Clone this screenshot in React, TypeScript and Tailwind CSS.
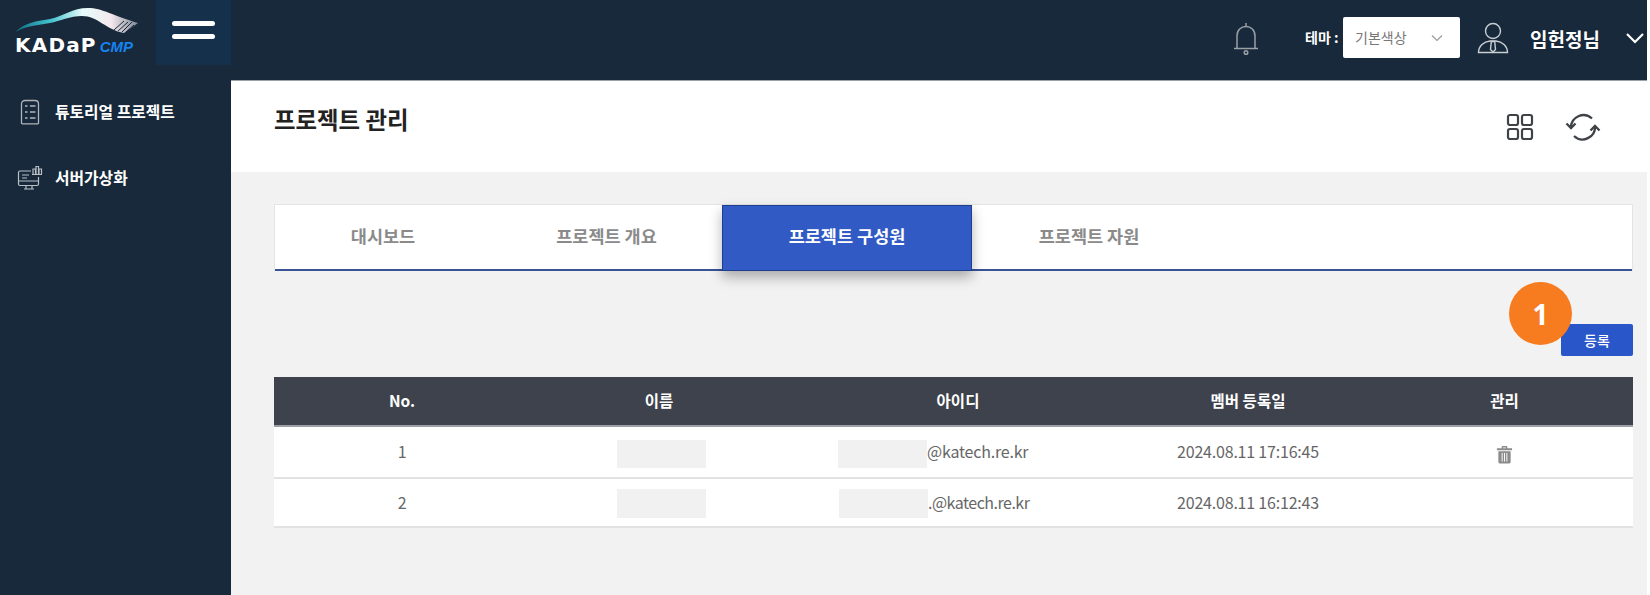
const kr = "font-['Noto_Sans_CJK_KR','Noto_Sans',sans-serif]";

const Logo = () => (
  <div className="relative h-[65px] w-[156px] shrink-0">
    <svg className="absolute left-[14px] top-[8px]" width="126" height="26" viewBox="0 0 126 26">
      <defs>
        <linearGradient id="swoosh" x1="0" x2="1" y1="0" y2="0">
          <stop offset="0" stopColor="#0e6f86" />
          <stop offset="0.3" stopColor="#46c4cf" />
          <stop offset="0.55" stopColor="#e8fbfb" />
          <stop offset="0.78" stopColor="#f3e9ee" />
          <stop offset="1" stopColor="#7d8794" />
        </linearGradient>
      </defs>
      <path d="M1 24C12 14 24 13 36 11C50 8 58 0 74 0C88 0 100 8 124 15L110 25C92 22 84 8 68 8C56 8 46 13 36 15C24 17 12 18 1 24Z" fill="url(#swoosh)" />
      <path d="M100 22l10-9M104 23l10-9M108 24l10-10M112 24l8-7" stroke="#1a2a3a" strokeWidth="1" />
    </svg>
    <div className="absolute left-[15px] top-[33px] flex items-baseline">
      <span className="font-['DejaVu_Sans',sans-serif] text-[20px] font-bold leading-[24px] tracking-[1.2px] text-white">KADaP</span>
      <span className="ml-[3px] font-['Liberation_Sans',sans-serif] text-[15px] font-bold italic leading-[24px] text-[#1583f0]">CMP</span>
    </div>
  </div>
);

const ClipboardIcon = () => (
  <svg width="20" height="26" viewBox="0 0 20 26" fill="none" stroke="#b0b5ba" strokeWidth="1.3">
    <path d="M5 1.500h10c2 0 3.500 1.500 3.500 3.500v19a.8.8 0 0 1-.8.8H2.300a.8.8 0 0 1-.8-.8V5c0-2 1.500-3.500 3.500-3.500Z" />
    <path d="M5 7h2.500M10 7h5.500M5 13h2.500M10 13h5.500M5 19h2.500M10 19h5.500" />
  </svg>
);

const MonitorIcon = () => (
  <svg width="26" height="26" viewBox="0 0 26 26" fill="none" stroke="#b9bfc5" strokeWidth="1.2">
    <path d="M14 6H3a1.500 1.500 0 0 0-1.500 1.500V19A1.500 1.500 0 0 0 3 20.500h17a1.500 1.500 0 0 0 1.500-1.500V12" />
    <path d="M1.500 16h20M9 20.500v3.500h6v-3.500M7 24h10M5 10h7M5 13h5" />
    <path d="M16 9V4h2.500v5M19 9V1.500h2.500V9M22 9V4h2.500v5M15 9.500h10" />
  </svg>
);

const BellIcon = () => (
  <svg width="26" height="34" viewBox="0 0 26 34" fill="none" stroke="#9aa0a6" strokeWidth="1.500">
    <path d="M13 1v3.500M4 26V14c0-6 4-9.500 9-9.500s9 3.500 9 9.500v12" />
    <path d="M1 26.500h24" />
    <circle cx="13" cy="30.500" r="1.800" />
  </svg>
);

const UserIcon = () => (
  <svg width="32" height="32" viewBox="0 0 32 32" fill="none" stroke="#c9ced3" strokeWidth="1.400">
    <circle cx="16" cy="9" r="7.500" />
    <path d="M1.500 30.500C1.500 24 7 19.500 13 19h6c6 .5 11.500 5 11.500 11.500Z" />
    <path d="M14.300 19.500h3.400l.8 8L16 30l-2.500-2.500Z" />
  </svg>
);

const GridIcon = () => (
  <svg width="28" height="28" viewBox="0 0 28 28" fill="none" stroke="#3f4347" strokeWidth="2.200">
    <rect x="2" y="2" width="10" height="10" rx="2" />
    <rect x="16" y="2" width="10" height="10" rx="2" />
    <rect x="2" y="16" width="10" height="10" rx="2" />
    <rect x="16" y="16" width="10" height="10" rx="2" />
  </svg>
);

const RefreshIcon = () => (
  <svg width="36" height="30" viewBox="0 0 36 30" fill="none" stroke="#3f4347" strokeWidth="2.300">
    <path d="M6 16A12.500 12.500 0 0 1 27 6.500" />
    <path d="M30 14A12.500 12.500 0 0 1 9 24" />
    <path d="M1.500 11.500L6 16l4.500-4.500" />
    <path d="M25.500 18.500L30 14l4.500 4.500" />
  </svg>
);

const TrashIcon = () => (
  <svg width="17" height="19" viewBox="0 0 18 19" fill="#8b8b8b">
    <path d="M6 3V1.500A1 1 0 0 1 7 .5h4a1 1 0 0 1 1 1V3h5v2H1V3Zm1.500-1v1h3V2Z" />
    <path d="M2.500 6h13v11.500a1.500 1.500 0 0 1-1.500 1.500H4a1.500 1.500 0 0 1-1.500-1.500ZM6 8v9h1V8Zm2.500 0v9h1V8ZM11 8v9h1V8Z" fillRule="evenodd" />
  </svg>
);

const Header = () => (
  <header className="flex h-[81px] shrink-0 bg-[#17293a]">
    <Logo />
    <div className="flex h-[65px] w-[75px] shrink-0 flex-col items-center gap-[8px] bg-[#15304a] pt-[21px]">
      <span className="h-[5px] w-[43px] rounded-full bg-white" />
      <span className="h-[5px] w-[43px] rounded-full bg-white" />
    </div>
    <div className="flex flex-1 items-start justify-end border-b border-[#9aa3ab]">
      <div className="mt-[22px]"><BellIcon /></div>
      <span className="ml-[46px] mt-[27px] w-[34px] whitespace-nowrap text-[14px] font-bold leading-[20px] text-white">테마 :</span>
      <div className="ml-[4px] mt-[17px] flex h-[41px] w-[117px] items-center justify-between rounded-[2px] bg-white pl-[12px] pr-[17px] text-[14px] text-[#777]">
        <span>기본색상</span>
        <svg width="12" height="8" viewBox="0 0 12 8" fill="none" stroke="#9a9a9a" strokeWidth="1.200"><path d="M1 1.500l5 5 5-5" /></svg>
      </div>
      <div className="ml-[17px] mt-[22px]"><UserIcon /></div>
      <span className="ml-[21px] mt-[25px] w-[70px] whitespace-nowrap text-[19px] font-bold leading-[28px] text-white">임헌정님</span>
      <svg className="ml-[25px] mr-[2px] mt-[32px]" width="20" height="12" viewBox="0 0 20 12" fill="none" stroke="#fff" strokeWidth="2.200"><path d="M2 2l8 8 8-8" /></svg>
    </div>
  </header>
);

const Sidebar = () => (
  <aside className="w-[231px] shrink-0 bg-[#17293a] pl-[16px] pt-[19px] text-[15.8px] font-bold text-white">
    <div className="flex h-[24px] items-center gap-[11px]">
      <div className="flex w-[28px] justify-center"><ClipboardIcon /></div>
      <span>튜토리얼 프로젝트</span>
    </div>
    <div className="mt-[42px] flex h-[24px] items-center gap-[11px]">
      <div className="flex w-[28px] justify-center"><MonitorIcon /></div>
      <span>서버가상화</span>
    </div>
  </aside>
);

const Tabs = () => (
  <div className="relative flex h-[67px] border-x border-t border-[#e4e4e4] bg-white text-[17.5px] font-bold text-[#8a8a8a]">
    <div className="absolute inset-x-0 bottom-0 h-[2px] bg-[#3a5296]" />
    <div className="flex w-[216px] items-center justify-center pb-[4px]">대시보드</div>
    <div className="flex w-[231px] items-center justify-center pb-[4px]">프로젝트 개요</div>
    <div className="relative flex w-[250px] items-center justify-center border border-[#1c3f8f] bg-[#315ac4] pb-[4px] text-white shadow-[0_6px_12px_rgba(0,0,0,0.3)]">프로젝트 구성원</div>
    <div className="flex w-[234px] items-center justify-center pb-[4px]">프로젝트 자원</div>
  </div>
);

const gridCols = "grid grid-cols-[256px_258px_340px_240px_265px] items-center text-center";

const Row = ({ no, idClass, boxClass, id, date, trash, h }: { no: string; idClass: string; boxClass: string; id: string; date: string; trash?: boolean; h: string }) => (
  <div className={`${gridCols} ${h} border-b-2 border-[#e2e2e2] bg-white text-[16px] tracking-[-0.2px] text-[#666]`}>
    <span className="-mt-[2px]">{no}</span>
    <div className="flex justify-center pl-[4px]">
      <div className={`${boxClass} w-[89px] bg-[#f1f1f1]`} />
    </div>
    <div className={`flex items-center ${idClass}`}>
      <div className={`${boxClass} w-[89px] shrink-0 bg-[#f1f1f1]`} />
      <span className="-mt-[2px]">{id}</span>
    </div>
    <span className="-mt-[2px] whitespace-nowrap">{date}</span>
    <div className="mt-[4px] flex justify-center pl-[8px]">
      {trash && <TrashIcon />}
    </div>
  </div>
);

const Table = () => (
  <div className="mt-[21px]">
    <div className={`${gridCols} h-[50px] border-b-2 border-b-[#9b9ea5] bg-[#3e424c] text-[15.5px] font-bold text-white`}>
      <span>No.</span>
      <span>이름</span>
      <span>아이디</span>
      <span>멤버 등록일</span>
      <span className="pl-[8px]">관리</span>
    </div>
    <Row h="h-[52px]" no="1" idClass="pl-[50px]" boxClass="mt-[4px] h-[28px]" id="@katech.re.kr" date="2024.08.11 17:16:45" trash />
    <Row h="h-[49px]" no="2" idClass="pl-[51px] tracking-[-0.5px]" boxClass="mt-[2px] h-[29px]" id=".@katech.re.kr" date="2024.08.11 16:12:43" />
  </div>
);

export default function App() {
  return (
    <div className={`flex h-[595px] w-[1650px] flex-col overflow-hidden bg-white pr-[3px] ${kr}`}>
      <Header />
      <div className="flex flex-1">
        <Sidebar />
        <main className="flex flex-1 flex-col bg-[#f2f2f2]">
          <div className="flex h-[91px] shrink-0 items-center justify-between bg-white pl-[43px] pr-[46px]">
            <h1 className="-mt-[13px] text-[23.4px] font-bold text-[#222]">프로젝트 관리</h1>
            <div className="flex items-center gap-[31px]">
              <GridIcon />
              <RefreshIcon />
            </div>
          </div>
          <div className="relative flex-1 pl-[43px] pr-[14px] pt-[32px]">
            <Tabs />
            <div className="mt-[53px] flex justify-end">
              <button className="h-[32px] w-[72px] rounded-[2px] bg-[#2957c9] text-[14px] font-medium text-white">등록</button>
            </div>
            <Table />
            <div className="absolute left-[1278px] top-[110px] flex size-[63px] items-center justify-center rounded-full bg-[#f77c20] font-['Open_Sans',sans-serif] text-[28px] font-bold text-white">1</div>
          </div>
        </main>
      </div>
    </div>
  );
}
